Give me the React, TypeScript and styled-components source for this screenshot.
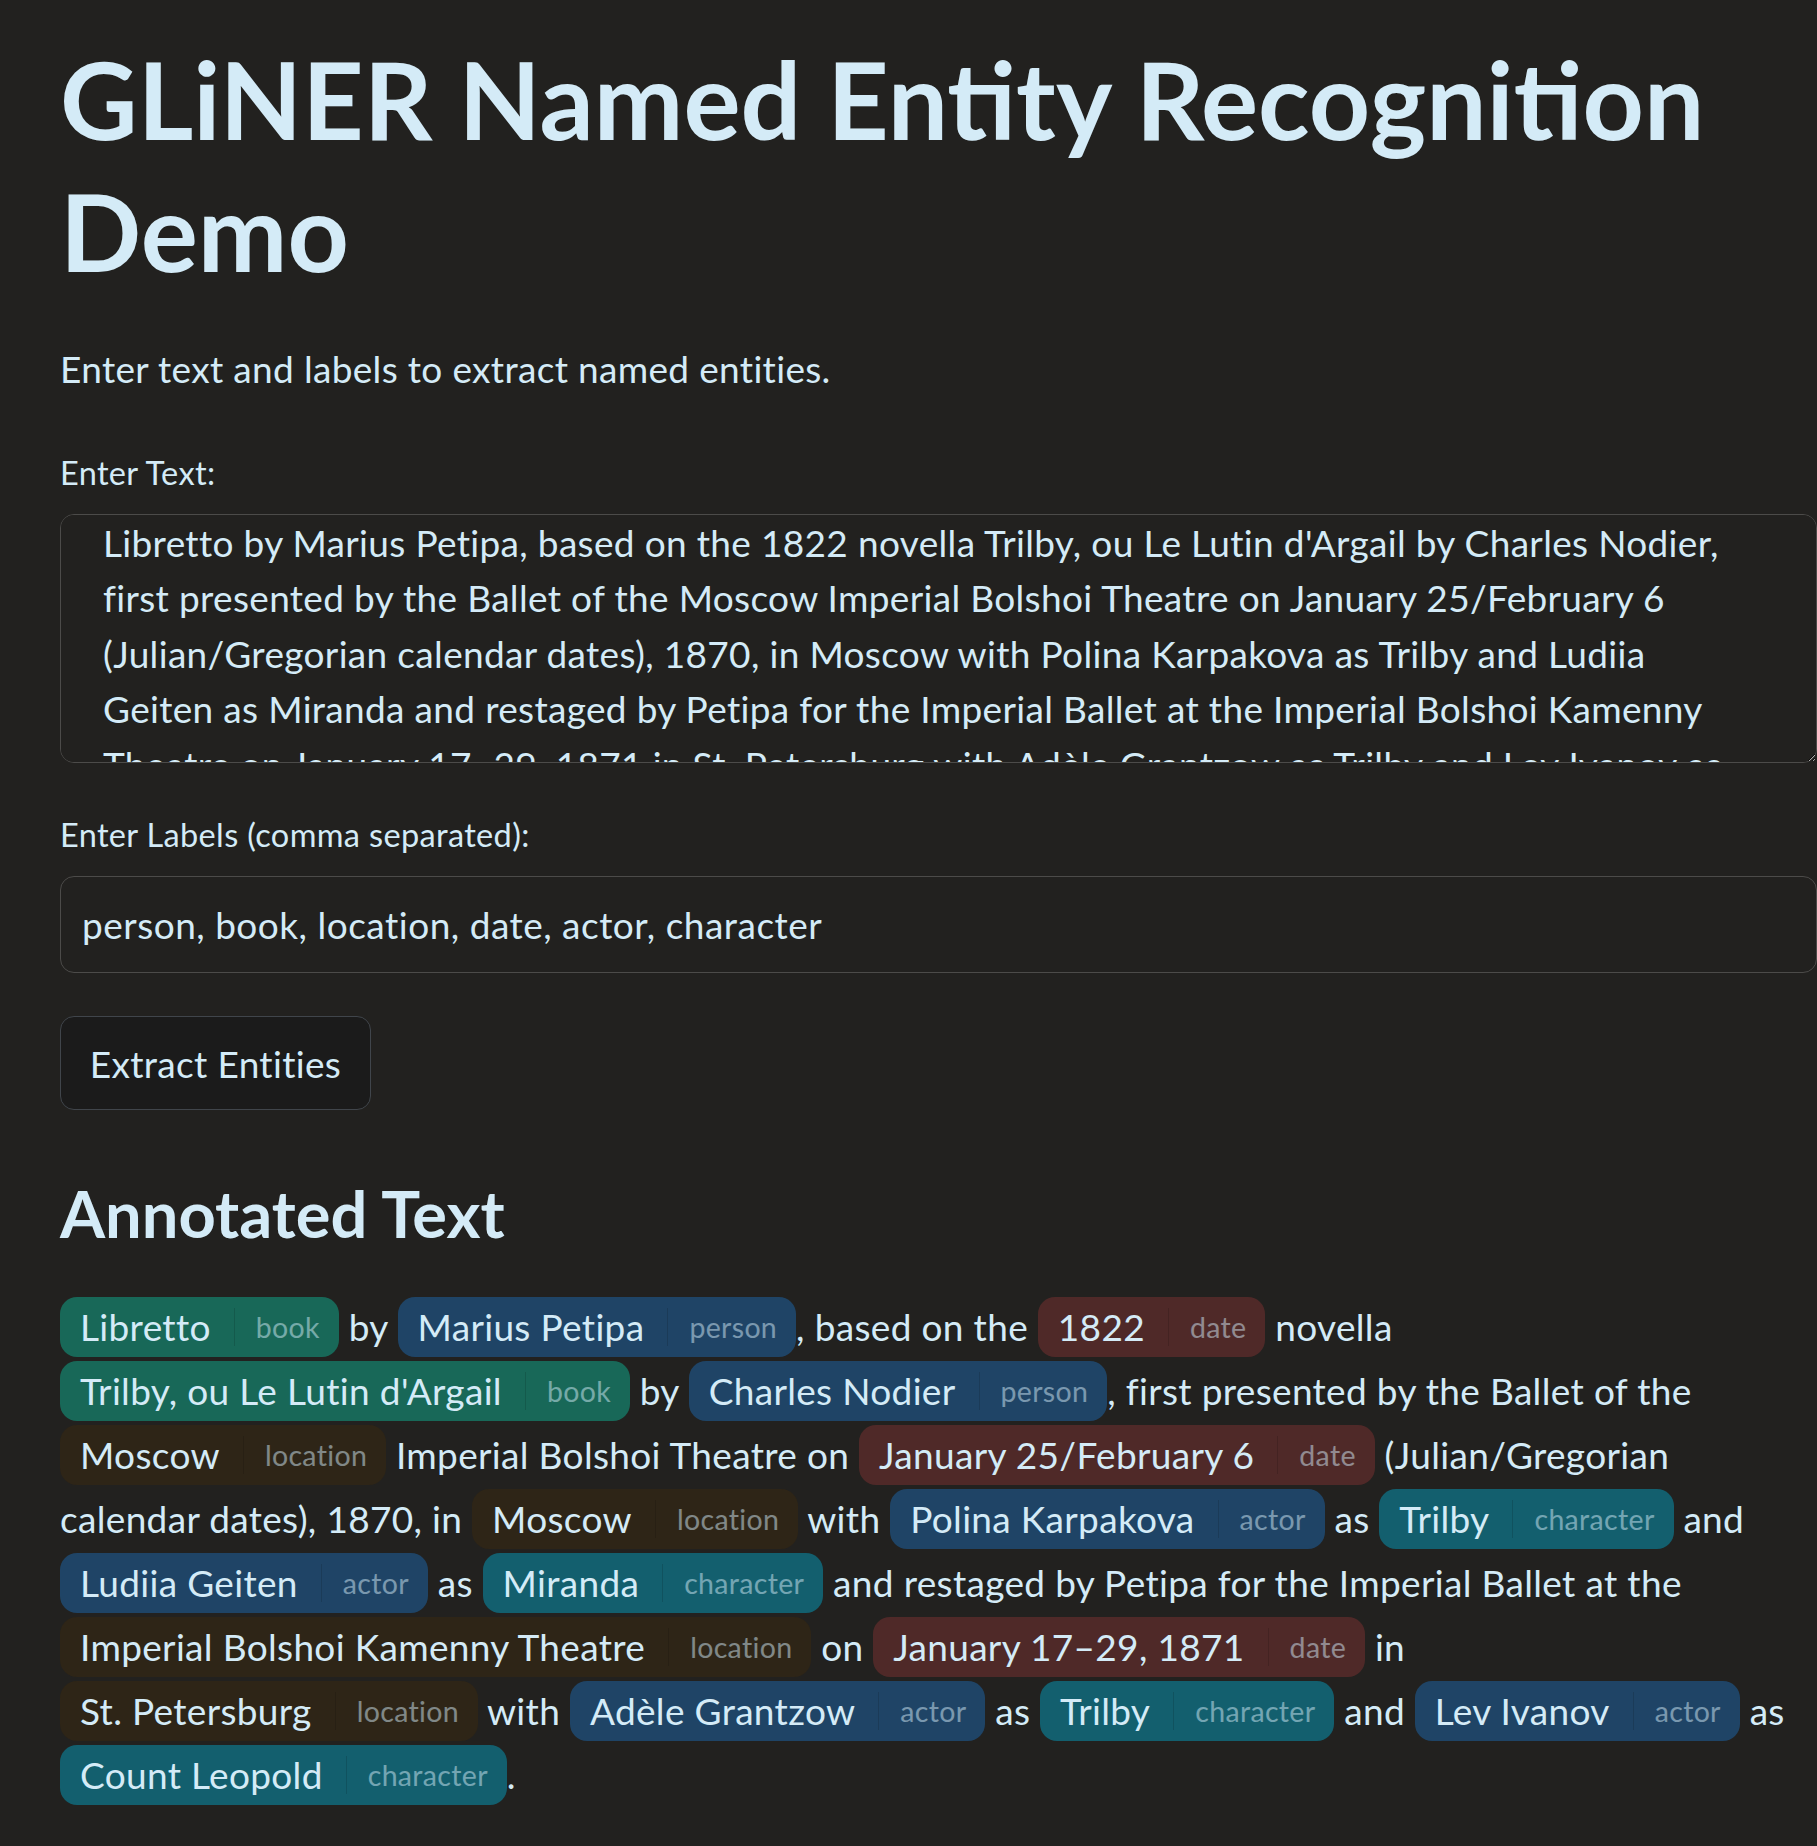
import React from "react";
import styled, { createGlobalStyle } from "styled-components";

const GlobalStyle = createGlobalStyle`
  html, body { margin: 0; padding: 0; background: #22211f; }
  body {
    font-family: Lato, "Noto Sans", sans-serif;
    color: #d4ebf7;
    color-scheme: dark;
  }
  * { box-sizing: border-box; }
`;

const Page = styled.main`
  width: 1817px;
  padding: 33px 0 60px 60px;
  display: flex;
  flex-direction: column;
  align-items: flex-start;
`;

const Title = styled.h1`
  margin: 0;
  font-size: 107px;
  font-weight: 700;
  line-height: 132px;
  color: #d4ebf7;
`;

const Subtitle = styled.p`
  margin: 45px 0 0;
  font-size: 37px;
  letter-spacing: 0.33px;
  line-height: 54px;
`;

const FieldLabel = styled.label<{ $gap: number }>`
  margin-top: ${(p) => p.$gap}px;
  font-size: 32.5px;
  letter-spacing: 0.35px;
  line-height: 40px;
`;

const TextArea = styled.textarea`
  margin-top: 21px;
  width: 100%;
  height: 249px;
  padding: 0 76px 0 42px;
  background: #22211f;
  color: #d4ebf7;
  border: 1px solid #4c4b49;
  border-radius: 14px;
  font-family: inherit;
  font-size: 37px;
  letter-spacing: 0.33px;
  line-height: 55.4px;
  outline: none;
  resize: vertical;
  scrollbar-width: none;
`;

const TextInput = styled.input`
  margin-top: 21px;
  width: 100%;
  height: 97px;
  padding: 0 21px;
  background: #22211f;
  color: #d4ebf7;
  border: 1px solid #4c4b49;
  border-radius: 14px;
  font-family: inherit;
  font-size: 37px;
  letter-spacing: 0.5px;
  outline: none;
`;

const Button = styled.button`
  margin-top: 43px;
  width: 311px;
  height: 94px;
  background: #1b1b1b;
  color: #d4ebf7;
  border: 1px solid #40454b;
  border-radius: 14px;
  font-family: inherit;
  font-size: 37px;
  letter-spacing: 0.33px;
  cursor: pointer;
`;

const SectionTitle = styled.h2`
  margin: 63px 0 0;
  font-size: 65px;
  font-weight: 700;
  line-height: 80px;
  color: #d4ebf7;
`;

const Annotated = styled.div`
  margin-top: 42px;
  width: 100%;
  font-size: 37px;
  letter-spacing: 0.33px;
  line-height: 64px;
`;

const chipColors: Record<string, string> = {
  book: "#186858",
  person: "#1f4466",
  actor: "#1f4466",
  date: "#4f2928",
  location: "#2e2517",
  character: "#135f6e",
};

const Chip = styled.span<{ $bg: string }>`
  display: inline-flex;
  align-items: stretch;
  height: 60px;
  padding: 13px 19px 13px 20px;
  border-radius: 17px;
  background: ${(p) => p.$bg};
  line-height: 34px;
  white-space: nowrap;
`;

const ChipText = styled.span`
  line-height: 34px;
`;

const ChipDivider = styled.span`
  width: 1px;
  margin: -2px 21px -2px 23px;
  background: rgba(0, 0, 0, 0.13);
`;

const ChipLabel = styled.span`
  font-size: 28.5px;
  line-height: 34px;
  opacity: 0.5;
`;

type Seg = string | [string, string];

const segments: Seg[] = [
  ["Libretto", "book"],
  " by ",
  ["Marius Petipa", "person"],
  ", based on the ",
  ["1822", "date"],
  " novella ",
  ["Trilby, ou Le Lutin d'Argail", "book"],
  " by ",
  ["Charles Nodier", "person"],
  ", first presented by the Ballet of the ",
  ["Moscow", "location"],
  " Imperial Bolshoi Theatre on ",
  ["January 25/February 6", "date"],
  " (Julian/Gregorian calendar dates), 1870, in ",
  ["Moscow", "location"],
  " with ",
  ["Polina Karpakova", "actor"],
  " as ",
  ["Trilby", "character"],
  " and ",
  ["Ludiia Geiten", "actor"],
  " as ",
  ["Miranda", "character"],
  " and restaged by Petipa for the Imperial Ballet at the ",
  ["Imperial Bolshoi Kamenny Theatre", "location"],
  " on ",
  ["January 17–29, 1871", "date"],
  " in ",
  ["St. Petersburg", "location"],
  " with ",
  ["Adèle Grantzow", "actor"],
  " as ",
  ["Trilby", "character"],
  " and ",
  ["Lev Ivanov", "actor"],
  " as ",
  ["Count Leopold", "character"],
  ".",
];

const sourceText =
  "Libretto by Marius Petipa, based on the 1822 novella Trilby, ou Le Lutin d'Argail by Charles Nodier, first presented by the Ballet of the Moscow Imperial Bolshoi Theatre on January 25/February 6 (Julian/Gregorian calendar dates), 1870, in Moscow with Polina Karpakova as Trilby and Ludiia Geiten as Miranda and restaged by Petipa for the Imperial Ballet at the Imperial Bolshoi Kamenny Theatre on January 17–29, 1871 in St. Petersburg with Adèle Grantzow as Trilby and Lev Ivanov as Count Leopold.";

export default function App() {
  return (
    <>
      <GlobalStyle />
      <Page>
        <Title>GLiNER Named Entity Recognition Demo</Title>
        <Subtitle>Enter text and labels to extract named entities.</Subtitle>
        <FieldLabel $gap={57}>Enter Text:</FieldLabel>
        <TextArea defaultValue={sourceText} />
        <FieldLabel $gap={52}>Enter Labels (comma separated):</FieldLabel>
        <TextInput defaultValue="person, book, location, date, actor, character" />
        <Button>Extract Entities</Button>
        <SectionTitle>Annotated Text</SectionTitle>
        <Annotated>
          {segments.map((s, i) =>
            typeof s === "string" ? (
              <React.Fragment key={i}>{s}</React.Fragment>
            ) : (
              <Chip key={i} $bg={chipColors[s[1]]}>
                <ChipText>{s[0]}</ChipText>
                <ChipDivider />
                <ChipLabel>{s[1]}</ChipLabel>
              </Chip>
            )
          )}
        </Annotated>
      </Page>
    </>
  );
}
